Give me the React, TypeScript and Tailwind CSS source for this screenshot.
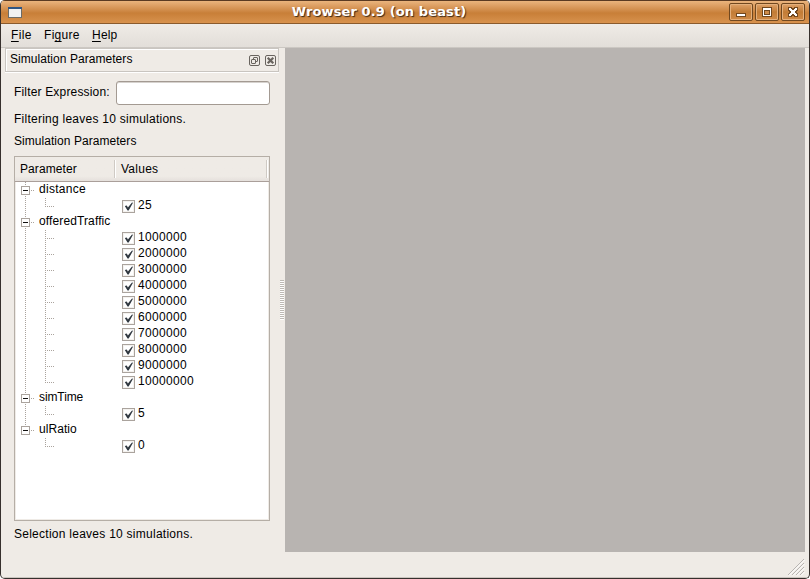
import type { ReactNode } from 'react';

type Group = { name: string; tracking: string; values: string[] };

const groups: Group[] = [
  { name: 'distance', tracking: 'tracking-[0.28px]', values: ['25'] },
  {
    name: 'offeredTraffic',
    tracking: 'tracking-[0.12px]',
    values: ['1000000', '2000000', '3000000', '4000000', '5000000', '6000000', '7000000', '8000000', '9000000', '10000000'],
  },
  { name: 'simTime', tracking: 'tracking-[-0.1px]', values: ['5'] },
  { name: 'ulRatio', tracking: 'tracking-[0.05px]', values: ['0'] },
];

function TitleButton({ children }: { children: ReactNode }) {
  return (
    <button className="h-[18px] w-6 rounded-[2px] border border-[#71481f] bg-linear-to-b from-[#dfa268] via-[#c27c35] to-[#d08b48] shadow-[inset_0_0_0_1px_#e4b07c]">
      <svg className="block" width="22" height="16" viewBox="0 0 22 16" shapeRendering="crispEdges">{children}</svg>
    </button>
  );
}

function TitleBar() {
  return (
    <header className="flex h-6 shrink-0 items-center border-t border-b border-t-[#5a3a22] border-b-[#8a5a2c] bg-linear-to-b from-[#eab47d] via-[#c87f38] via-55% to-[#d8924d] pr-1 pl-[7px]">
      <svg width="14" height="11" viewBox="0 0 14 11" shapeRendering="crispEdges">
        <rect width="14" height="11" fill="#6c6c68" />
        <rect width="14" height="2" fill="#2f5583" />
        <rect x="1" y="2" width="12" height="8" fill="#f1f1f1" />
      </svg>
      <h1 className="flex-1 text-center font-['DejaVu_Sans',sans-serif] text-[13px] leading-5 font-bold tracking-[0.12px] text-white [text-shadow:1px_1px_1px_#3c2817]">
        <span className="ml-[7px]">Wrowser 0.9 (on beast)</span>
      </h1>
      <div className="flex gap-0.5">
        <TitleButton>
          <rect x="6" y="9" width="10" height="4" fill="#71481f" />
          <rect x="7" y="10" width="8" height="2" fill="#fff" />
        </TitleButton>
        <TitleButton>
          <rect x="6" y="3" width="10" height="10" fill="#71481f" />
          <rect x="7" y="4" width="8" height="8" fill="#fff" />
          <rect x="8" y="6" width="6" height="5" fill="#71481f" />
          <rect x="9" y="7" width="4" height="3" fill="#cf8c4a" />
        </TitleButton>
        <TitleButton>
          <path d="M6 3h4v1h2v-1h4v4h-1v2h1v4h-4v-1h-2v1h-4v-4h1v-2h-1z" fill="#71481f" />
          <path d="M7 4h2v1h1v1h2v-1h1v-1h2v2h-1v1h-1v2h1v1h1v2h-2v-1h-1v-1h-2v1h-1v1h-2v-2h1v-1h1v-2h-1v-1h-1z" fill="#fff" />
        </TitleButton>
      </div>
    </header>
  );
}

function MenuBar() {
  return (
    <nav className="flex h-6 shrink-0 gap-3 border-b border-[#cbc7c2] bg-linear-to-b from-[#efebe6] to-[#e2ded9] pl-2.5 leading-[22px]">
      <span className="w-[21px] tracking-[0.4px]"><u className="underline-offset-2">F</u>ile</span>
      <span className="w-9 tracking-[0.3px]">Fi<u className="underline-offset-2 [text-decoration-skip-ink:none]">g</u>ure</span>
      <span className="tracking-[0.2px]"><u className="underline-offset-2">H</u>elp</span>
    </nav>
  );
}

function DockHeader() {
  return (
    <div className="ml-1 flex h-6 w-[274px] items-center border border-[#c9c5c0] pr-[2px] pl-1 shadow-[inset_1px_1px_0_#fff,0_1px_0_#fff]">
      <span className="flex-1 pb-0.5 leading-5 tracking-[0.05px]">Simulation Parameters</span>
      <svg width="27" height="11" viewBox="0 0 27 11" fill="none" stroke="#69645f">
        <rect x=".5" y=".5" width="10" height="10" rx="1.5" />
        <rect x="4.5" y="2.5" width="4" height="4" rx=".5" />
        <rect x="2.5" y="4.5" width="4" height="4" rx=".5" fill="#efebe6" />
        <rect x="16.5" y=".5" width="10" height="10" rx="1.5" />
        <path d="M18.7 2.7l5.6 5.6m0-5.6l-5.6 5.6" strokeWidth="2.2" />
      </svg>
    </div>
  );
}

function Check() {
  return (
    <span className="mt-0.5 h-[13px] w-[13px] shrink-0 border border-[#aaa39d] bg-white shadow-[inset_0_0_0_1px_#f4f2ef]">
      <svg className="block" width="11" height="11" viewBox="0 0 11 11">
        <path d="M1.8 5L3.8 4.6L4.9 6.5L9 1.5L10 1.7L5.7 9.6L4.5 9.6Z" fill="#303840" />
      </svg>
    </span>
  );
}

function GroupRow({ name, tracking, last }: { name: string; tracking: string; last: boolean }) {
  return (
    <div className="flex h-4">
      <svg width="24" height="16" viewBox="0 0 24 16" shapeRendering="crispEdges" fill="none">
        <path d={last ? 'M10.5 0V8' : 'M10.5 0V16'} stroke="#aaa39d" strokeDasharray="1 1" />
        <path d="M16 8.5H20" stroke="#aaa39d" strokeDasharray="1 1" />
        <rect x="6.5" y="4.5" width="8" height="8" fill="#fff" stroke="#aaa39d" />
        <path d="M8 8.5H13" stroke="#111" />
      </svg>
      <span className={`leading-[14px] ${tracking}`}>{name}</span>
    </div>
  );
}

function ValueRow({ value, lastValue, lastGroup }: { value: string; lastValue: boolean; lastGroup: boolean }) {
  return (
    <div className="flex h-4">
      <svg className="mr-[67px]" width="40" height="16" viewBox="0 0 40 16" shapeRendering="crispEdges" fill="none" stroke="#aaa39d" strokeDasharray="1 1">
        {!lastGroup && <path d="M10.5 0V16" />}
        <path d={lastValue ? 'M30.5 0V9' : 'M30.5 0V16'} />
        <path d="M30 8.5H40" />
      </svg>
      <Check />
      <span className="ml-[3px] leading-[14px] tracking-[0.33px]">{value}</span>
    </div>
  );
}

function ParameterTree() {
  return (
    <div className="mt-[5px] flex h-[365px] w-64 flex-col border border-[#b5aea6] bg-white shadow-[inset_0_0_0_1px_#efebe6]">
      <div className="flex h-[25px] items-center border-b border-[#aa9f9a] bg-linear-to-b from-[#efebe6] from-80% to-[#e5e0dc] pr-px">
        <span className="w-[99px] pl-[5px] tracking-[0.08px]">Parameter</span>
        <span className="h-[18px] w-0.5 border-r border-l border-r-white border-l-[#cfcac4]" />
        <span className="flex-1 pl-[5px] tracking-[0.25px]">Values</span>
        <span className="h-[18px] w-0.5 border-r border-l border-r-white border-l-[#cfcac4]" />
      </div>
      {groups.map((group, g) => (
        <div key={group.name}>
          <GroupRow name={group.name} tracking={group.tracking} last={g === groups.length - 1} />
          {group.values.map((value, v) => (
            <ValueRow key={value} value={value} lastValue={v === group.values.length - 1} lastGroup={g === groups.length - 1} />
          ))}
        </div>
      ))}
    </div>
  );
}

function ParameterDock() {
  return (
    <aside className="w-[278px] shrink-0">
      <DockHeader />
      <div className="flex flex-col pl-[13px]">
        <label className="mt-[9px] flex h-6 items-center">
          <span className="w-[102px] pb-0.5 leading-5 tracking-[0.17px]">Filter Expression:</span>
          <input className="h-6 w-[154px] rounded-[3px] border border-[#a39a92] bg-white px-1 shadow-[inset_0_1px_0_#d6d2ce] outline-none" />
        </label>
        <p className="mt-[5px] h-[18px] leading-[18px] tracking-[0.25px]">Filtering leaves 10 simulations.</p>
        <p className="mt-[5px] h-[18px] leading-[16px] tracking-[0.05px]">Simulation Parameters</p>
        <ParameterTree />
        <p className="mt-1 h-[18px] leading-[18px] tracking-[0.26px]">Selection leaves 10 simulations.</p>
      </div>
    </aside>
  );
}

export default function App() {
  return (
    <div className="h-[579px] w-[810px] bg-white">
      <div className="flex h-[579px] w-[810px] flex-col overflow-hidden rounded-t-[5px] rounded-b-[5px] border-r border-b border-l border-[#36302d] bg-[#efebe6] font-['Liberation_Sans',Arial,sans-serif] text-xs text-black">
        <TitleBar />
        <MenuBar />
        <main className="flex h-[504px] shrink-0">
          <ParameterDock />
          <div className="flex w-1.5 shrink-0 items-center pl-[1px]">
            <div className="h-10 w-1 bg-[repeating-linear-gradient(to_bottom,#bdb9b4_0_1px,#fff_1px_2px)]" />
          </div>
          <section className="w-[520px] shrink-0 bg-[#b8b4b1]" />
        </main>
        <footer className="flex flex-1 items-end justify-end border-b border-[#cbc5bf] pr-1 pb-[1px]">
          <svg width="18" height="18" viewBox="0 0 18 18" fill="none">
            <path d="M1 17L17 1M5 17L17 5M9 17L17 9M13 17L17 13" stroke="#b8b4b1" />
            <path d="M2 17.5L17.5 2M6 17.5L17.5 6M10 17.5L17.5 10M14 17.5L17.5 14" stroke="#fff" />
          </svg>
        </footer>
      </div>
    </div>
  );
}
